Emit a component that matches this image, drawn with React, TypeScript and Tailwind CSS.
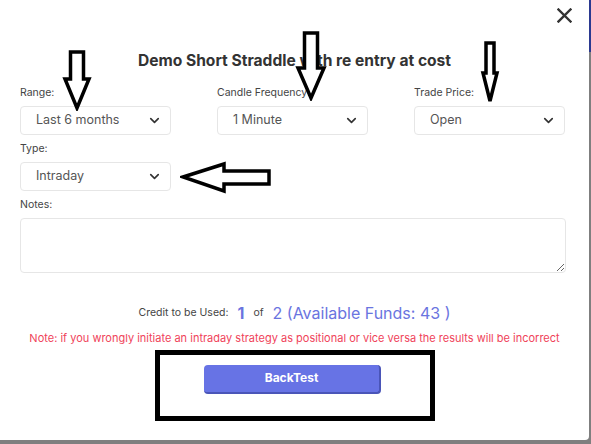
import { ChevronDown } from "lucide-react";

const font = "font-['Inter',sans-serif]";

function Select({ value }: { value: string }) {
  return (
    <div className="h-[29px] w-[151px] flex items-center justify-between pl-[15px] pr-[8px] border border-[#e6e6e6] rounded-[4px] bg-white">
      <span className="text-[12.5px] text-[#555]">{value}</span>
      <ChevronDown size={15} strokeWidth={2.6} className="text-[#333]" />
    </div>
  );
}

function Field({ label, value }: { label: string; value: string }) {
  return (
    <div className="flex flex-col">
      <span className="text-[10.5px] leading-[14px] text-[#444]">{label}</span>
      <div className="mt-[6px]">
        <Select value={value} />
      </div>
    </div>
  );
}

// annotation arrows drawn over the form
function DownArrow({ x, y, shaftW, headW, shaftH, headH }: { x: number; y: number; shaftW: number; headW: number; shaftH: number; headH: number }) {
  const w = headW + 6;
  const cx = w / 2;
  const h = shaftH + headH + 6;
  const pts = [
    [cx - shaftW / 2, 3],
    [cx + shaftW / 2, 3],
    [cx + shaftW / 2, 3 + shaftH],
    [cx + headW / 2, 3 + shaftH],
    [cx, 3 + shaftH + headH],
    [cx - headW / 2, 3 + shaftH],
    [cx - shaftW / 2, 3 + shaftH],
  ]
    .map((p) => p.join(","))
    .join(" ");
  return (
    <svg className="absolute" style={{ left: x - 3, top: y - 3 }} width={w} height={h}>
      <polygon points={pts} fill="white" stroke="black" strokeWidth={3.5} strokeLinejoin="miter" />
    </svg>
  );
}

export default function App() {
  return (
    <div className={`w-[591px] h-[444px] bg-[#7f7f7f] relative overflow-hidden ${font}`}>
      <div className="absolute right-0 top-0 w-[2px] h-[52px] bg-[#2b3990]" />
      <div className="relative w-[589px] h-[440px] bg-white rounded-br-[4px] flex flex-col items-center">
        {/* close */}
        <button className="absolute right-[17px] top-[8px] w-[15px] h-[15px]">
          <svg width="15" height="15" viewBox="0 0 15 15">
            <path d="M1.5 1.5 L13.5 13.5 M13.5 1.5 L1.5 13.5" stroke="#333" strokeWidth="2.4" strokeLinecap="square" />
          </svg>
        </button>

        <h2 className="mt-[51px] text-[15.6px] leading-[20px] font-bold text-[#333]">
          Demo Short Straddle with re entry at cost
        </h2>

        <div className="w-full px-[20px] mt-[15px]">
          <div className="grid grid-cols-[151px_151px_151px] gap-x-[46px] gap-y-[7px]">
            <Field label="Range:" value="Last 6 months" />
            <Field label="Candle Frequency:" value="1 Minute" />
            <Field label="Trade Price:" value="Open" />
            <Field label="Type:" value="Intraday" />
          </div>

          <div className="mt-[7px] flex flex-col">
            <span className="text-[10.5px] leading-[14px] text-[#444]">Notes:</span>
            <textarea className="mt-[6px] w-[546px] h-[55px] border border-[#e6e6e6] rounded-[4px] outline-none" />
          </div>
        </div>

        <div className="mt-[30px] h-[20px] flex items-center gap-[9px] text-[#6a74e0]">
          <span className="text-[10.5px] text-[#444]">Credit to be Used:</span>
          <span className="text-[16px] font-bold">1</span>
          <span className="text-[10.5px] text-[#444]">of</span>
          <span className="text-[16px]">2 (Available Funds: 43 )</span>
        </div>

        <p className="mt-[8px] text-[11px] leading-[14px] text-[#f0435a]">
          Note: if you wrongly initiate an intraday strategy as positional or vice versa the results will be incorrect
        </p>

        <div className="mt-[5px] w-[280px] h-[71px] border-[5px] border-black pl-[44px] pt-[9px] self-start ml-[155px]">
          <button className="w-[177px] h-[29px] bg-[#6773e5] rounded-[4px] border-b-2 border-r-2 border-[#4a55b8] text-white text-[12px] font-bold">
            BackTest
          </button>
        </div>

        <DownArrow x={65} y={52} shaftW={13} headW={24} shaftH={27} headH={29} />
        <DownArrow x={298} y={33} shaftW={13} headW={26} shaftH={35} headH={30} />
        <DownArrow x={483} y={43} shaftW={8} headW={14} shaftH={30} headH={28} />

        <svg className="absolute left-[180px] top-[161px]" width="93" height="34">
          <polygon
            points="3,16 44,3 44,10 89,10 89,23 44,23 44,30"
            fill="white"
            stroke="black"
            strokeWidth={3.5}
          />
        </svg>
      </div>
    </div>
  );
}
